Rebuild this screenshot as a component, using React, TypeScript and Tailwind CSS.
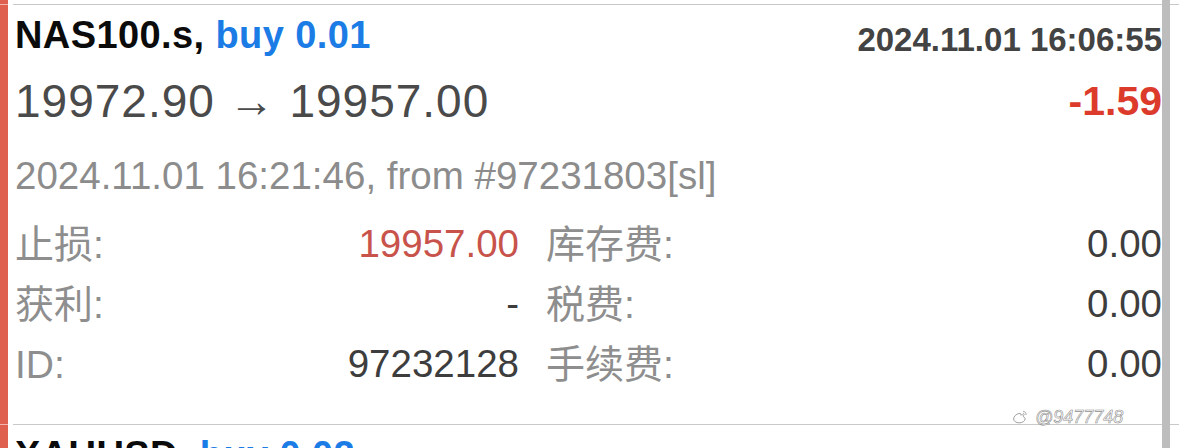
const RED_BAR = "bg-[#e0604f]";

function Separator() {
  return (
    <div className="flex h-px shrink-0">
      <div className="w-[8px] bg-[#f0b7ae]" />
      <div className="w-[5px] bg-white" />
      <div className="flex-1 bg-[#c9c9c9]" />
    </div>
  );
}

function Cell({ label, value, valueClass }: { label: string; value: string; valueClass: string }) {
  return (
    <div className="flex h-[60px] items-center justify-between">
      <span className="text-[39px] leading-none text-[#8e8e8e]">{label}</span>
      <span className={`text-[38.5px] leading-none ${valueClass}`}>{value}</span>
    </div>
  );
}

function Weibo() {
  return (
    <svg width="16" height="15" viewBox="0 0 15 14" fill="none" stroke="#9a9a9a" strokeWidth="0.9">
      <path d="M6.5 3.2c-2.6 0.6-5 2.9-5 5.2 0 2.1 2.4 3.6 5.2 3.6 3.300 0 5.6-1.9 5.6-3.7 0-1.2-1-1.7-1.6-1.9 0.4-0.8 0.4-1.600-0.4-1.9-0.8-0.3-2.1 0.3-2.1 0.3 0.3-0.9 0.1-2-1.7-1.6z" />
      <path d="M10.5 1.2c1.6 0.2 2.9 1.6 2.7 3.4" />
      <path d="M10.2 2.9c0.8 0.1 1.3 0.8 1.2 1.6" />
    </svg>
  );
}

export default function App() {
  return (
    <div className="relative h-[448px] w-[1179px] overflow-hidden bg-white font-['Liberation_Sans','Noto_Sans_CJK_SC',sans-serif]">
      <div className="flex flex-col">
        <div className="flex h-[4px] shrink-0">
          <div className={`w-[8px] ${RED_BAR}`} />
        </div>
        <Separator />
        <div className="flex h-[419px] shrink-0">
          <div className={`w-[8px] ${RED_BAR}`} />
          <div className="flex flex-1 flex-col pl-[7px] pr-[17px] pt-[9px]">
            <div className="flex items-start justify-between">
              <div className="text-[38px] font-bold leading-[42px] tracking-[0.4px]">
                <span className="text-[#0b0b0b]">NAS100.s, </span>
                <span className="text-[#1c7ce6]">buy 0.01</span>
              </div>
              <div className="mt-[5px] text-[33px] font-bold leading-[42px] text-[#434343]">2024.11.01 16:06:55</div>
            </div>
            <div className="mt-[15px] flex h-[50px] items-center justify-between">
              <div className="text-[46px] leading-none tracking-[1px] text-[#4a4a4a]">19972.90 → 19957.00</div>
              <div className="text-[41px] font-bold leading-none text-[#dc3b2b]">-1.59</div>
            </div>
            <div className="mt-[27px] flex h-[46px] items-center">
              <span className="text-[38.5px] leading-none text-[#8c8c8c]">2024.11.01 16:21:46, from #97231803[sl]</span>
            </div>
            <div className="mt-[15px] grid grid-cols-[504px_1fr] gap-x-[27px]">
              <Cell label="止损:" value="19957.00" valueClass="text-[#c8534b]" />
              <Cell label="库存费:" value="0.00" valueClass="text-[#3d3d3d]" />
              <Cell label="获利:" value="-" valueClass="text-[#3d3d3d]" />
              <Cell label="税费:" value="0.00" valueClass="text-[#3d3d3d]" />
              <Cell label="ID:" value="97232128" valueClass="text-[#3d3d3d]" />
              <Cell label="手续费:" value="0.00" valueClass="text-[#3d3d3d]" />
            </div>
          </div>
        </div>
        <Separator />
        <div className="flex h-[40px] shrink-0">
          <div className={`w-[8px] ${RED_BAR}`} />
          <div className="flex flex-1 items-start justify-between pl-[7px] pr-[17px] pt-[9px]">
            <div className="text-[38px] font-bold leading-[42px] tracking-[0.4px]">
              <span className="text-[#0b0b0b]">XAUUSD, </span>
              <span className="text-[#1c7ce6]">buy 0.02</span>
            </div>
            <div className="mt-[5px] text-[33px] font-bold leading-[42px] text-[#434343]">2024.11.01 16:07:48</div>
          </div>
        </div>
      </div>

      {/* watermark */}
      <div className="absolute left-[1012px] top-[408px] flex items-center gap-[7px]">
        <Weibo />
        <span className="text-[18px] italic leading-none text-white [-webkit-text-stroke:0.6px_#8f8f8f]">@9477748</span>
      </div>

      {/* scrollbar */}
      <div className="absolute left-[1162px] top-0 h-full w-[8px] bg-[#bdbdbd]" />
    </div>
  );
}
